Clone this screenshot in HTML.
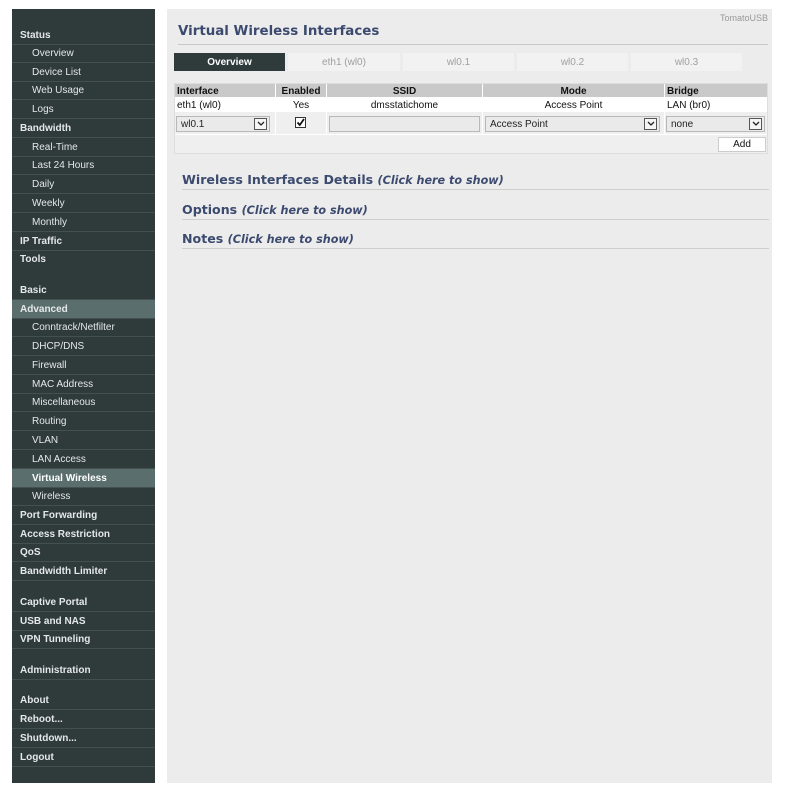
<!DOCTYPE html>
<html><head><meta charset="utf-8"><style>
*{margin:0;padding:0;box-sizing:border-box}
body{width:785px;height:787px;background:#fff;font-family:"Liberation Sans",Verdana,sans-serif;position:relative;overflow:hidden}
#side{position:absolute;left:12px;top:9px;width:143px;height:774px;background:#2f3a3a}
.it{position:absolute;left:0;width:143px;height:19px;line-height:20px;font-size:10px;color:#e4e8e8;border-bottom:1px solid #44504f;padding-left:20px;white-space:nowrap}
.it.h{font-weight:bold;padding-left:8px}
.it.sub{padding-left:20px}
.act{background:#5b6e6e}
#main{position:absolute;left:167px;top:9px;width:605px;height:774px;background:#ececec}
.a{position:absolute;white-space:nowrap}
.tab{position:absolute;top:53px;height:18px;line-height:18px;text-align:center;font-size:10px;color:#a0a0a0;background:#f2f2f2}
.sel{position:absolute;height:16px;border:1px solid #b8b8b8;background:#eaeaea;font-size:10px;line-height:16px;padding-left:4px;color:#222}
.arr{position:absolute;right:2px;top:1px;width:13px;height:12px;border:1px solid #555;background:#f5f5f5}
.arr svg{position:absolute;left:2px;top:2px}
.sec{position:absolute;left:182px;font-family:"DejaVu Sans",Verdana,sans-serif;font-size:12.6px;font-weight:bold;color:#3b4a6e}
.sec i{font-size:11.2px;font-weight:bold}
.ln{position:absolute;left:182px;width:587px;height:1px;background:#cfcfcf}
</style></head><body>
<div id="side">
<div class="it h" style="top:17px">Status</div>
<div class="it sub" style="top:35px">Overview</div>
<div class="it sub" style="top:54px">Device List</div>
<div class="it sub" style="top:72px">Web Usage</div>
<div class="it sub" style="top:91px">Logs</div>
<div class="it h" style="top:110px">Bandwidth</div>
<div class="it sub" style="top:129px">Real-Time</div>
<div class="it sub" style="top:147px">Last 24 Hours</div>
<div class="it sub" style="top:166px">Daily</div>
<div class="it sub" style="top:185px">Weekly</div>
<div class="it sub" style="top:204px">Monthly</div>
<div class="it h" style="top:223px">IP Traffic</div>
<div class="it h" style="top:241px;border-bottom:none">Tools</div>
<div class="it h" style="top:272px">Basic</div>
<div class="it h act" style="top:291px">Advanced</div>
<div class="it sub" style="top:309px">Conntrack/Netfilter</div>
<div class="it sub" style="top:328px">DHCP/DNS</div>
<div class="it sub" style="top:347px">Firewall</div>
<div class="it sub" style="top:366px">MAC Address</div>
<div class="it sub" style="top:384px">Miscellaneous</div>
<div class="it sub" style="top:403px">Routing</div>
<div class="it sub" style="top:422px">VLAN</div>
<div class="it sub" style="top:441px">LAN Access</div>
<div class="it sub act" style="top:460px;font-weight:bold;color:#fff">Virtual Wireless</div>
<div class="it sub" style="top:478px">Wireless</div>
<div class="it h" style="top:497px">Port Forwarding</div>
<div class="it h" style="top:516px">Access Restriction</div>
<div class="it h" style="top:534px">QoS</div>
<div class="it h" style="top:553px">Bandwidth Limiter</div>
<div class="it h" style="top:584px">Captive Portal</div>
<div class="it h" style="top:603px">USB and NAS</div>
<div class="it h" style="top:621px">VPN Tunneling</div>
<div class="it h" style="top:652px">Administration</div>
<div class="it h" style="top:682px">About</div>
<div class="it h" style="top:701px">Reboot...</div>
<div class="it h" style="top:720px">Shutdown...</div>
<div class="it h" style="top:739px">Logout</div>
</div>
<div id="main"></div>
<div class="a" style="left:720px;top:13px;font-size:9px;color:#999">TomatoUSB</div>
<div class="a" style="left:178px;top:24px;font-family:'DejaVu Sans',Verdana,sans-serif;font-size:13.4px;font-weight:bold;color:#3b4a6e">Virtual Wireless Interfaces</div>
<div class="a" style="left:178px;top:44px;width:590px;height:1px;background:#c8c8c8"></div>
<div class="tab" style="left:174px;width:111px;background:#2f3a3a;color:#fff;font-weight:bold;line-height:19px">Overview</div>
<div class="tab" style="left:288px;width:112px;line-height:19px">eth1 (wl0)</div>
<div class="tab" style="left:403px;width:111px;line-height:19px">wl0.1</div>
<div class="tab" style="left:517px;width:111px;line-height:19px">wl0.2</div>
<div class="tab" style="left:631px;width:111px;line-height:19px">wl0.3</div>
<div class="a" style="left:174px;top:83px;width:594px;height:71px;background:#efefef;border:1px solid #ddd"></div>
<div class="a" style="left:175px;top:84px;width:592px;height:13px;background:#c9c9c9"></div>
<div class="a" style="left:175px;top:97px;width:592px;height:15px;background:#fff"></div>
<div class="a" style="left:275px;top:84px;width:1px;height:50px;background:#fff"></div>
<div class="a" style="left:326px;top:84px;width:1px;height:50px;background:#fff"></div>
<div class="a" style="left:482px;top:84px;width:1px;height:50px;background:#fff"></div>
<div class="a" style="left:664px;top:84px;width:1px;height:50px;background:#fff"></div>
<div class="a" style="left:175px;top:134px;width:592px;height:1px;background:#fff"></div>
<div class="a" style="left:177px;top:86px;font-size:10px;font-weight:bold;color:#111">Interface</div>
<div class="a" style="left:276px;width:50px;text-align:center;top:86px;font-size:10px;font-weight:bold;color:#111">Enabled</div>
<div class="a" style="left:327px;width:155px;text-align:center;top:86px;font-size:10px;font-weight:bold;color:#111">SSID</div>
<div class="a" style="left:483px;width:181px;text-align:center;top:86px;font-size:10px;font-weight:bold;color:#111">Mode</div>
<div class="a" style="left:667px;top:86px;font-size:10px;font-weight:bold;color:#111">Bridge</div>
<div class="a" style="left:177px;top:100px;font-size:10px;color:#111">eth1 (wl0)</div>
<div class="a" style="left:276px;width:50px;text-align:center;top:100px;font-size:10px;color:#111">Yes</div>
<div class="a" style="left:327px;width:155px;text-align:center;top:100px;font-size:10px;color:#111">dmsstatichome</div>
<div class="a" style="left:483px;width:181px;text-align:center;top:100px;font-size:10px;color:#111">Access Point</div>
<div class="a" style="left:667px;top:100px;font-size:10px;color:#111">LAN (br0)</div>
<div class="sel" style="left:176px;top:116px;width:94px">wl0.1<span class="arr"><svg width="8" height="6"><path d="M1 1 L4 4 L7 1" stroke="#222" stroke-width="1.3" fill="none"/></svg></span></div>
<div class="a" style="left:295px;top:117px;width:11px;height:11px;border:1px solid #333;background:#fff"><svg width="9" height="9" style="position:absolute;left:0;top:0"><path d="M1.5 4.5 L3.8 7 L8 1" stroke="#111" stroke-width="1.8" fill="none"/></svg></div>
<div class="sel" style="left:329px;top:116px;width:151px"></div>
<div class="sel" style="left:485px;top:116px;width:175px">Access Point<span class="arr"><svg width="8" height="6"><path d="M1 1 L4 4 L7 1" stroke="#222" stroke-width="1.3" fill="none"/></svg></span></div>
<div class="sel" style="left:666px;top:116px;width:99px">none<span class="arr"><svg width="8" height="6"><path d="M1 1 L4 4 L7 1" stroke="#222" stroke-width="1.3" fill="none"/></svg></span></div>
<div class="a" style="left:718px;top:137px;width:48px;height:15px;background:#fff;border:1px solid #ccc;font-size:10px;line-height:14px;text-align:center;color:#111">Add</div>
<div class="sec" style="top:172px">Wireless Interfaces Details <i>(Click here to show)</i></div>
<div class="ln" style="top:189px"></div>
<div class="sec" style="top:202px">Options <i>(Click here to show)</i></div>
<div class="ln" style="top:219px"></div>
<div class="sec" style="top:231px">Notes <i>(Click here to show)</i></div>
<div class="ln" style="top:248px"></div>
</body></html>
